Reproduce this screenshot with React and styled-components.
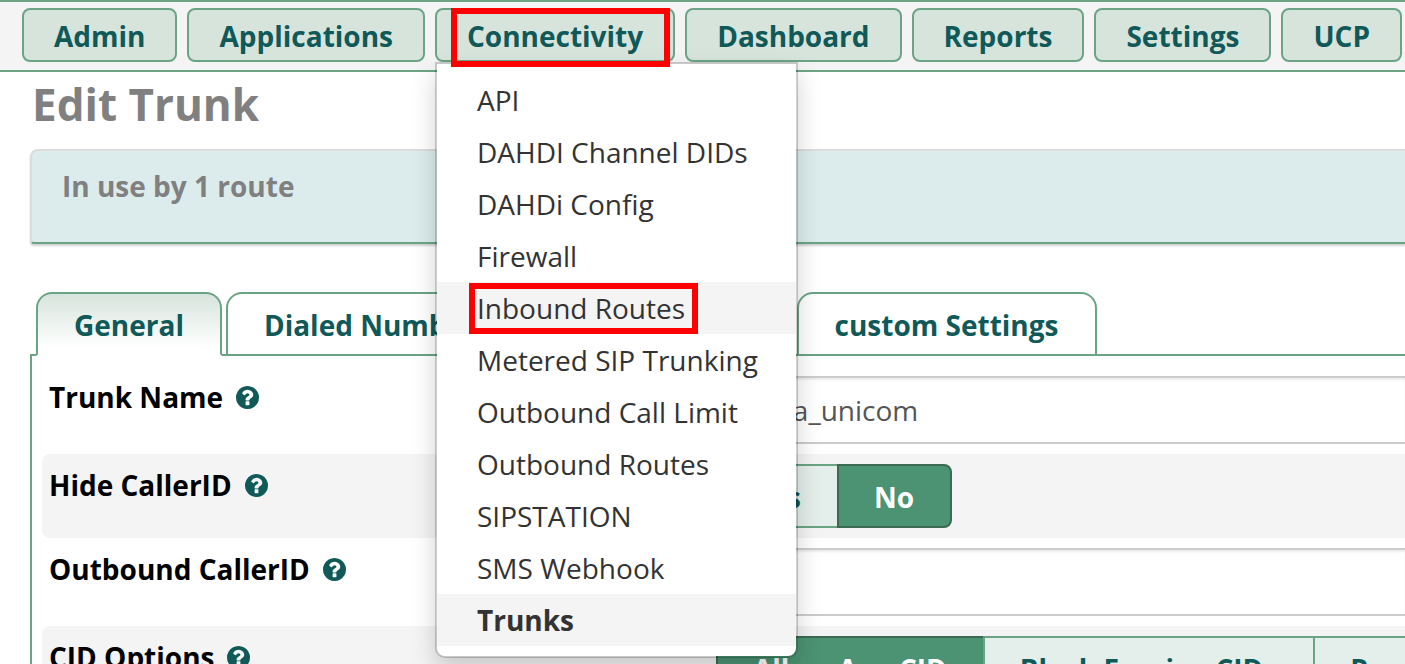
import React, { useState } from 'react';
import styled, { createGlobalStyle, css } from 'styled-components';

const colors = {
  green: '#6aa485',
  teal: '#105959',
  mint: '#d7e4dc',
  pale: '#e4eeea',
  active: '#4b9372',
  activeBorder: '#3a6a52',
  grey: '#f4f4f4',
};

const GlobalStyle = createGlobalStyle`
  * {
    box-sizing: border-box;
  }

  body {
    margin: 0;
    background: #fff;
    color: #000;
    font-family: 'Open Sans', 'Noto Sans', sans-serif;
    font-size: 28px;
    line-height: 40px;
  }
`;

const Page = styled.div`
  height: 100vh;
  overflow: hidden;
`;

const NavBar = styled.nav`
  display: flex;
  gap: 10px;
  padding: 6px 0 8px 22px;
  background: ${colors.grey};
  border-top: 2px solid ${colors.green};
  border-bottom: 2px solid ${colors.green};
`;

const NavItem = styled.div`
  position: relative;
  flex: none;
`;

const NavButton = styled.button`
  display: block;
  height: 54px;
  padding: 2px 30px 0;
  border: 2px solid ${colors.green};
  border-radius: 8px;
  background: ${colors.mint};
  color: ${colors.teal};
  font: inherit;
  font-weight: 700;
  cursor: pointer;
`;

const Mark = styled.span`
  position: absolute;
  z-index: 3;
  border: 6px solid #f00;
  pointer-events: none;
`;

const NavMark = styled(Mark)`
  inset: 0 5px -5px 16px;
`;

const LinkMark = styled(Mark)`
  inset: -6px -13px -7px -8px;
`;

const Menu = styled.ul`
  position: absolute;
  z-index: 2;
  top: 100%;
  left: 0;
  min-width: 362px;
  margin: 0;
  padding: 10px 0;
  list-style: none;
  background: #fff;
  background-clip: padding-box;
  border: 2px solid rgba(0, 0, 0, 0.18);
  border-radius: 0 0 10px 10px;
  box-shadow: 0 12px 24px rgba(0, 0, 0, 0.175);
`;

const MenuLink = styled.a`
  display: block;
  padding: 6px 38px 6px 40px;
  background: ${({ $shaded }) => ($shaded ? colors.grey : 'transparent')};
  color: #333;
  font-weight: ${({ $current }) => ($current ? 700 : 400)};
  text-decoration: none;
  white-space: nowrap;
`;

const MenuText = styled.span`
  position: relative;
`;

const Content = styled.main`
  padding-left: 30px;
`;

const Title = styled.h1`
  margin: 0;
  padding: 6px 0 2px 2px;
  color: #808080;
  font-size: 44px;
  font-weight: 700;
  line-height: 52px;
`;

const Usage = styled.section`
  height: 95px;
  margin: 17px 0 48px;
  padding: 15px 30px;
  background: #dcecec;
  border: 2px solid #dcdcdc;
  border-right: 0;
  border-bottom-color: ${colors.green};
  border-radius: 8px 0 0 4px;
  box-shadow: 0 2px 2px rgba(0, 0, 0, 0.18);
  color: #808080;
  font-weight: 700;
`;

const Tabs = styled.div`
  display: flex;
  gap: 4px;
  padding-left: 6px;
`;

const Tab = styled.button`
  height: 64px;
  padding: 2px 36px 0;
  border: 2px solid ${colors.green};
  border-radius: 16px 16px 0 0;
  background: #fff;
  color: ${colors.teal};
  font: inherit;
  font-weight: 700;
  white-space: nowrap;
  cursor: pointer;

  ${({ $active }) =>
    $active &&
    css`
      z-index: 1;
      border-bottom-color: #fff;
      background: linear-gradient(${colors.mint}, #fff 90%);
    `}
`;

const Form = styled.form`
  margin-top: -2px;
  padding: 10px 0 0 10px;
  border-top: 2px solid ${colors.green};
  border-left: 2px solid ${colors.green};
`;

const Row = styled.div`
  display: grid;
  grid-template-columns: 667px 1fr;
  padding: 10px 0 10px 7px;
  border-radius: 8px 0 0 8px;
  background: ${({ $shaded }) => ($shaded ? colors.grey : 'transparent')};
`;

const LabelCell = styled.div`
  display: flex;
  align-items: center;
  align-self: start;
  gap: 13px;
  padding-top: 1px;
  font-weight: 700;
`;

const HelpButton = styled.button`
  display: flex;
  padding: 0;
  border: 0;
  background: none;
  color: ${colors.teal};
  cursor: pointer;
`;

const TextInput = styled.input`
  width: 100%;
  height: 68px;
  padding: 0 20px;
  border: 2px solid #ccc;
  border-right: 0;
  border-radius: 8px 0 0 8px;
  background: #fff;
  box-shadow: inset 0 2px 2px rgba(0, 0, 0, 0.075);
  color: #555;
  font: inherit;
`;

const RadioSet = styled.div`
  display: flex;
`;

const HiddenRadio = styled.input`
  position: absolute;
  opacity: 0;
`;

const RadioLabel = styled.label`
  position: relative;
  flex: none;
  height: 64px;
  padding: 11px 36px 9px 35px;
  border: 2px solid ${colors.green};
  background: ${colors.pale};
  color: ${colors.teal};
  font-weight: 700;
  cursor: pointer;

  & + & {
    margin-left: -2px;
  }

  &:first-child {
    border-radius: 8px 0 0 8px;
  }

  &:last-child {
    border-radius: 0 8px 8px 0;
  }

  ${({ $checked }) =>
    $checked &&
    css`
      border-color: ${colors.activeBorder};
      background: ${colors.active};
      color: #fff;
    `}
`;

const navItems = ['Admin', 'Applications', 'Connectivity', 'Dashboard', 'Reports', 'Settings', 'UCP'];

const menuItems = [
  { name: 'API' },
  { name: 'DAHDI Channel DIDs' },
  { name: 'DAHDi Config' },
  { name: 'Firewall' },
  { name: 'Inbound Routes', marked: true },
  { name: 'Metered SIP Trunking' },
  { name: 'Outbound Call Limit' },
  { name: 'Outbound Routes' },
  { name: 'SIPSTATION' },
  { name: 'SMS Webhook' },
  { name: 'Trunks', current: true },
];

const tabs = ['General', 'Dialed Number Manipulation Rules', 'custom Settings'];

const Help = ({ topic }) => (
  <HelpButton type="button" aria-label={`Help for ${topic}`}>
    <svg width="23" height="23" viewBox="128 128 1536 1536" fill="currentColor" aria-hidden="true">
      <path d="M1024 1376v-192q0-14-9-23t-23-9h-192q-14 0-23 9t-9 23v192q0 14 9 23t23 9h192q14 0 23-9t9-23zm256-672q0-88-55.5-163t-138.5-116-170-41q-243 0-371 213-15 24 8 42l132 100q7 6 19 6 16 0 25-12 53-68 86-92 34-24 86-24 48 0 85.5 26t37.5 59q0 38-20 61t-68 45q-63 28-115.5 86.5t-52.5 125.5v36q0 14 9 23t23 9h192q14 0 23-9t9-23q0-19 21.5-49.5t54.5-49.5q32-18 49-28.5t46-35 44.5-48 28-60.5 12.5-81zm384 192q0 209-103 385.5t-279.5 279.5-385.5 103-385.5-103-279.5-279.5-103-385.5 103-385.5 279.5-279.5 385.5-103 385.5 103 279.5 279.5 103 385.5z" />
    </svg>
  </HelpButton>
);

const Radios = ({ name, label, options, initial }) => {
  const [value, setValue] = useState(initial);
  return (
    <RadioSet role="radiogroup" aria-label={label}>
      {options.map(option => (
        <RadioLabel key={option} $checked={option === value}>
          <HiddenRadio
            type="radio"
            name={name}
            checked={option === value}
            onChange={() => setValue(option)}
          />
          {option}
        </RadioLabel>
      ))}
    </RadioSet>
  );
};

const Connectivity = () => (
  <Menu>
    {menuItems.map(({ name, marked, current }) => (
      <li key={name}>
        <MenuLink href="#" $shaded={marked || current} $current={current}>
          <MenuText>
            {name}
            {marked && <LinkMark />}
          </MenuText>
        </MenuLink>
      </li>
    ))}
  </Menu>
);

const App = () => {
  const [tab, setTab] = useState('General');

  return (
    <Page>
      <GlobalStyle />
      <NavBar>
        {navItems.map(name => (
          <NavItem key={name}>
            <NavButton type="button">{name}</NavButton>
            {name === 'Connectivity' && (
              <>
                <Connectivity />
                <NavMark />
              </>
            )}
          </NavItem>
        ))}
      </NavBar>
      <Content>
        <Title>Edit Trunk</Title>
        <Usage>In use by 1 route</Usage>
        <Tabs role="tablist">
          {tabs.map(name => (
            <Tab
              key={name}
              type="button"
              role="tab"
              aria-selected={name === tab}
              $active={name === tab}
              onClick={() => setTab(name)}
            >
              {name}
            </Tab>
          ))}
        </Tabs>
        <Form>
          <Row>
            <LabelCell>
              <label htmlFor="trunk_name">Trunk Name</label>
              <Help topic="Trunk Name" />
            </LabelCell>
            <TextInput id="trunk_name" defaultValue="china_unicom" />
          </Row>
          <Row $shaded>
            <LabelCell>
              <span>Hide CallerID</span>
              <Help topic="Hide CallerID" />
            </LabelCell>
            <Radios name="hcid" label="Hide CallerID" options={['Yes', 'No']} initial="No" />
          </Row>
          <Row>
            <LabelCell>
              <label htmlFor="outcid">Outbound CallerID</label>
              <Help topic="Outbound CallerID" />
            </LabelCell>
            <TextInput id="outcid" />
          </Row>
          <Row $shaded>
            <LabelCell>
              <span>CID Options</span>
              <Help topic="CID Options" />
            </LabelCell>
            <Radios
              name="keepcid"
              label="CID Options"
              options={['Allow Any CID', 'Block Foreign CIDs', 'Remove CNAM', 'Force Trunk CID']}
              initial="Allow Any CID"
            />
          </Row>
        </Form>
      </Content>
    </Page>
  );
};

export default App;
